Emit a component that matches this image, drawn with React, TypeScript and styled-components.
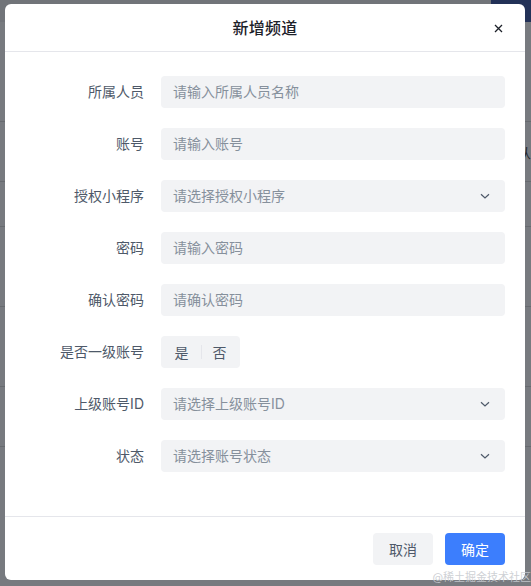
import React from "react";
import styled, { createGlobalStyle } from "styled-components";

const Global = createGlobalStyle`
  html, body { margin: 0; padding: 0; }
  body {
    width: 531px;
    height: 586px;
    overflow: hidden;
    background: #ffffff;
    font-family: Inter, "Noto Sans CJK SC", "Noto Sans", sans-serif;
  }
  * { box-sizing: border-box; }
`;

const Page = styled.div`
  width: 531px;
  height: 586px;
  position: relative;
  overflow: hidden;
  display: flex;
  flex-direction: column;
  background: #fff;
`;

const PageTop = styled.div`
  height: 22px;
  display: flex;
  justify-content: flex-end;
  background: #f0f0f0;
`;

const PageBrand = styled.div`
  width: 40px;
  background: #2b4a9b;
`;

const PageRow = styled.div<{ $h: number }>`
  height: ${(p) => p.$h}px;
  border-bottom: 1px solid #d6d6d6;
  display: flex;
  justify-content: flex-end;
  align-items: center;
  font-size: 14px;
  color: #333;
`;

const Mask = styled.div`
  position: absolute;
  inset: 0;
  background: rgba(29, 33, 41, 0.6);
  display: flex;
  justify-content: flex-start;
  align-items: flex-start;
  padding: 4px 0 0 5px;
`;

const Modal = styled.div`
  width: 520px;
  height: 576px;
  background: #fff;
  border-radius: 6px;
  display: flex;
  flex-direction: column;
  overflow: hidden;
`;

const Header = styled.div`
  height: 48px;
  flex: none;
  display: flex;
  align-items: center;
  justify-content: center;
  position: relative;
  border-bottom: 1px solid #e5e6eb;
`;

const Title = styled.div`
  font-size: 16px;
  font-weight: 500;
  color: #1d2129;
  letter-spacing: 0.3px;
  margin-top: -1px;
`;

const Close = styled.button`
  position: absolute;
  right: 20px;
  top: 17px;
  width: 14px;
  height: 14px;
  padding: 0;
  border: none;
  background: transparent;
  display: flex;
  align-items: center;
  justify-content: center;
  cursor: pointer;
`;

const Body = styled.div`
  flex: 1;
  padding: 24px 20px 24px;
  display: flex;
  flex-direction: column;
  gap: 20px;
`;

const Row = styled.div`
  display: flex;
  align-items: center;
  height: 32px;
`;

const Label = styled.div`
  width: 136px;
  flex: none;
  padding-right: 17px;
  text-align: right;
  font-size: 14px;
  line-height: 20px;
  margin-top: -1px;
  color: #4e5969;
`;

const Field = styled.div`
  width: 344px;
  height: 32px;
  border-radius: 4px;
  background: #f2f3f5;
  display: flex;
  align-items: center;
  justify-content: space-between;
  padding: 0 12px;
  font-size: 14px;
  color: #86909c;
`;

const Placeholder = styled.span`
  line-height: 20px;
  margin-top: -1px;
`;

const Chevron = styled.span`
  display: flex;
  align-items: center;
  margin-right: 2px;
`;

const Segmented = styled.div`
  height: 32px;
  border-radius: 4px;
  background: #f2f3f5;
  display: flex;
  align-items: center;
  padding: 0 1.5px;
`;

const SegItem = styled.div<{ $sep?: boolean }>`
  height: 28px;
  padding: 0 12px 1px;
  display: flex;
  align-items: center;
  font-size: 14px;
  color: #4e5969;
  position: relative;
  &::before {
    content: "";
    display: ${(p) => (p.$sep ? "block" : "none")};
    position: absolute;
    left: 0;
    top: 7px;
    height: 14px;
    width: 1px;
    background: #e5e6eb;
  }
`;

const Footer = styled.div`
  flex: none;
  border-top: 1px solid #e5e6eb;
  padding: 16px 20px 15px;
  display: flex;
  justify-content: flex-end;
  gap: 12px;
`;

const Button = styled.button<{ $primary?: boolean }>`
  width: 60px;
  height: 32px;
  border: none;
  border-radius: 4px;
  font-family: inherit;
  font-size: 14px;
  padding: 0 0 1px;
  background: ${(p) => (p.$primary ? "#3c7efd" : "#f2f3f5")};
  color: ${(p) => (p.$primary ? "#ffffff" : "#4e5969")};
  cursor: pointer;
`;

const Watermark = styled.div`
  position: absolute;
  right: 0;
  bottom: 2px;
  font-size: 11px;
  color: rgba(200, 203, 208, 0.9);
  white-space: nowrap;
`;

const DownIcon = () => (
  <svg width="12" height="12" viewBox="0 0 12 12" fill="none">
    <path d="M2 4.2 L6 8 L10 4.2" stroke="#4e5969" strokeWidth="1.2" />
  </svg>
);

const CloseIcon = () => (
  <svg width="9" height="9" viewBox="0 0 9 9" fill="none">
    <path d="M1 1 L8 8 M8 1 L1 8" stroke="#1d2129" strokeWidth="1.3" />
  </svg>
);

type Item = { label: string; placeholder?: string; select?: boolean; radio?: boolean };

const items: Item[] = [
  { label: "所属人员", placeholder: "请输入所属人员名称" },
  { label: "账号", placeholder: "请输入账号" },
  { label: "授权小程序", placeholder: "请选择授权小程序", select: true },
  { label: "密码", placeholder: "请输入密码" },
  { label: "确认密码", placeholder: "请确认密码" },
  { label: "是否一级账号", radio: true },
  { label: "上级账号ID", placeholder: "请选择上级账号ID", select: true },
  { label: "状态", placeholder: "请选择账号状态", select: true },
];

export default function App() {
  return (
    <>
      <Global />
      <Page>
        <PageTop>
          <PageBrand />
        </PageTop>
        <PageRow $h={100} />
        <PageRow $h={60}>从</PageRow>
        <PageRow $h={45} />
        <PageRow $h={80} />
        <PageRow $h={80} />
        <PageRow $h={60} />
        <Mask>
          <Modal>
            <Header>
              <Title>新增频道</Title>
              <Close aria-label="close">
                <CloseIcon />
              </Close>
            </Header>
            <Body>
              {items.map((it) => (
                <Row key={it.label}>
                  <Label>{it.label}</Label>
                  {it.radio ? (
                    <Segmented>
                      <SegItem>是</SegItem>
                      <SegItem $sep>否</SegItem>
                    </Segmented>
                  ) : (
                    <Field>
                      <Placeholder>{it.placeholder}</Placeholder>
                      {it.select && (
                        <Chevron>
                          <DownIcon />
                        </Chevron>
                      )}
                    </Field>
                  )}
                </Row>
              ))}
            </Body>
            <Footer>
              <Button>取消</Button>
              <Button $primary>确定</Button>
            </Footer>
          </Modal>
        </Mask>
        <Watermark>@稀土掘金技术社区</Watermark>
      </Page>
    </>
  );
}
